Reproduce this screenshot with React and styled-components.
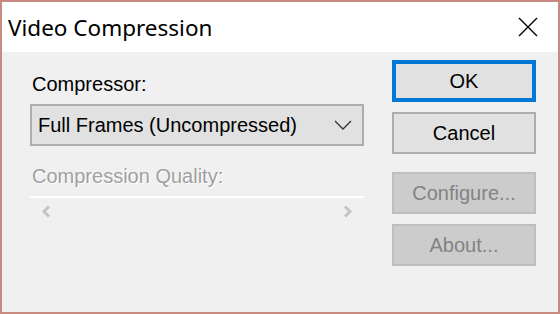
import React from 'react'
import styled, { createGlobalStyle } from 'styled-components'

const GlobalStyle = createGlobalStyle`
  html, body { margin: 0; padding: 0; background: #f0f0f0; }
  * { box-sizing: border-box; }
`

const uiFont = `"Liberation Sans", Arial, sans-serif`

const Dialog = styled.div`
  width: 560px;
  height: 314px;
  border: 2px solid #c88a7e;
  background: #f0f0f0;
  display: flex;
  flex-direction: column;
  font-family: ${uiFont};
`

const TitleBar = styled.div`
  height: 50px;
  flex: none;
  background: #ffffff;
  display: flex;
  align-items: center;
  justify-content: space-between;
  padding: 0 20px 0 6px;
`

const Title = styled.div`
  font-family: "Noto Sans", "Open Sans", sans-serif;
  font-size: 22.5px;
  color: #000;
`

const Body = styled.div`
  flex: 1;
  display: flex;
  gap: 28px;
  padding: 8px 22px 0 28px;
`

const LeftColumn = styled.div`
  flex: 1;
  display: flex;
  flex-direction: column;
  padding-top: 12px;
`

const Label = styled.div`
  font-size: 20px;
  line-height: 24px;
  margin-top: ${p => p.$gap || 0}px;
  color: ${p => (p.$disabled ? '#a0a0a0' : '#000')};
  text-shadow: ${p => (p.$disabled ? '1px 1px 0 #fff' : 'none')};
  padding-left: 2px;
`

const Combo = styled.div`
  margin-top: 8px;
  height: 42px;
  border: 2px solid #adadad;
  background: #e1e1e1;
  display: flex;
  align-items: center;
  justify-content: space-between;
  padding: 0 10px 0 6px;
  font-size: 20px;
  color: #000;
`

const Track = styled.div`
  margin-top: 8px;
  height: 2px;
  background: #ffffff;
`

const ArrowRow = styled.div`
  display: flex;
  justify-content: space-between;
  padding: 7px 10px 0 10px;
`

const RightColumn = styled.div`
  width: 144px;
  flex: none;
  display: flex;
  flex-direction: column;
`

const Button = styled.div`
  height: 42px;
  margin-top: ${p => p.$gap || 0}px;
  display: flex;
  align-items: center;
  justify-content: center;
  font-size: 20px;
  border: ${p => (p.$default ? '4px solid #0078d7' : p.$disabled ? '2px solid #bfbfbf' : '2px solid #adadad')};
  background: ${p => (p.$disabled ? '#cccccc' : '#e1e1e1')};
  color: ${p => (p.$disabled ? '#838383' : '#000')};
`

const Chevron = ({ dir }) => (
  <svg width="13" height="13" viewBox="0 0 13 13">
    <path
      d={dir === 'left' ? 'M9 1.5 L4 6.5 L9 11.5' : 'M4 1.5 L9 6.5 L4 11.5'}
      fill="none"
      stroke="#c4c4c4"
      strokeWidth="3"
    />
  </svg>
)

export default function App() {
  return (
    <>
      <GlobalStyle />
      <Dialog>
        <TitleBar>
          <Title>Video Compression</Title>
          <svg width="20" height="20" viewBox="0 0 20 20">
            <path d="M1 1 L19 19 M19 1 L1 19" stroke="#000" strokeWidth="1.4" />
          </svg>
        </TitleBar>
        <Body>
          <LeftColumn>
            <Label>Compressor:</Label>
            <Combo>
              <span>Full Frames (Uncompressed)</span>
              <svg width="18" height="10" viewBox="0 0 18 10">
                <path d="M1 1 L9 9 L17 1" fill="none" stroke="#333" strokeWidth="1.3" />
              </svg>
            </Combo>
            <Label $disabled $gap={18}>Compression Quality:</Label>
            <Track />
            <ArrowRow>
              <Chevron dir="left" />
              <Chevron dir="right" />
            </ArrowRow>
          </LeftColumn>
          <RightColumn>
            <Button $default>OK</Button>
            <Button $gap={10}>Cancel</Button>
            <Button $gap={18} $disabled>Configure...</Button>
            <Button $gap={10} $disabled>About...</Button>
          </RightColumn>
        </Body>
      </Dialog>
    </>
  )
}
